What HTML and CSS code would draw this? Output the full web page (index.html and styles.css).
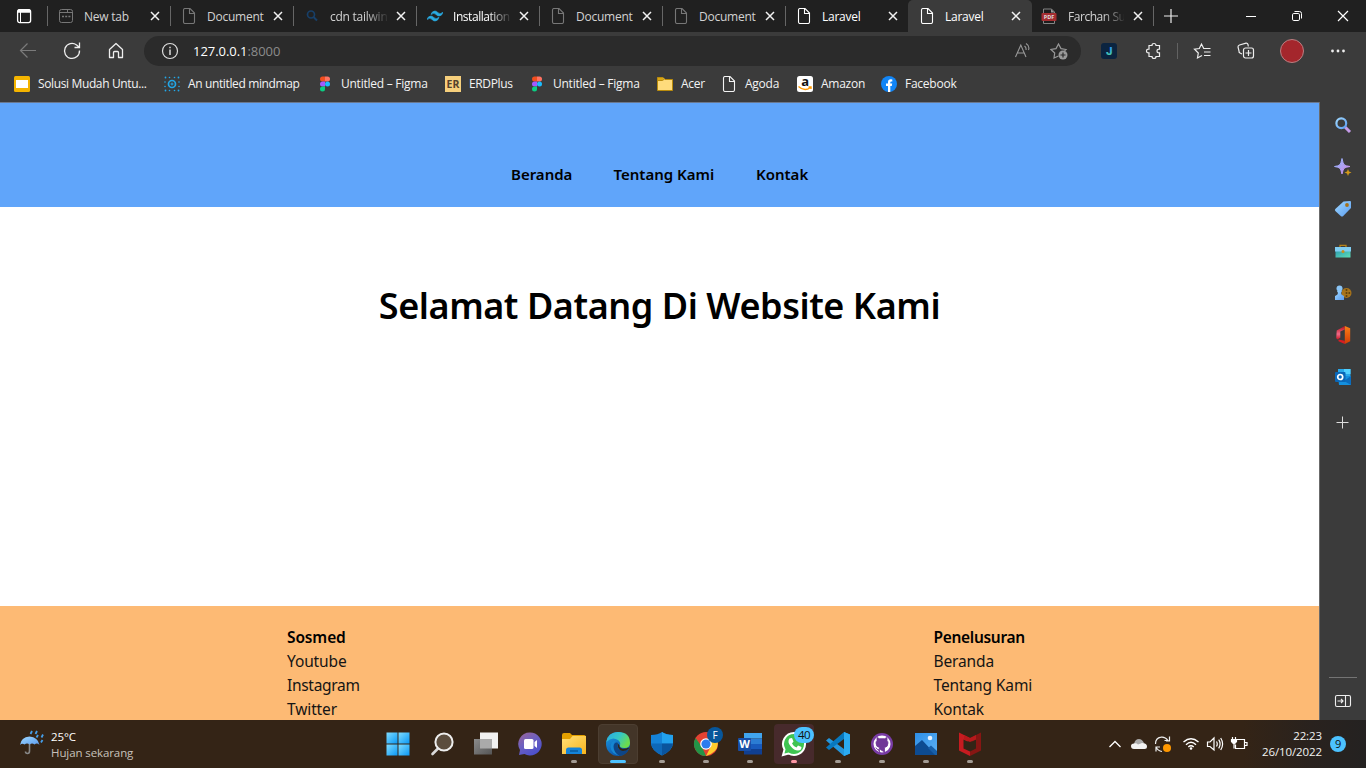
FILE: index.html
```html
<!DOCTYPE html>
<html lang="id">
<head>
<meta charset="utf-8">
<title>Laravel</title>
<link rel="stylesheet" href="styles.css">
</head>
<body>
<svg class="defs" width="0" height="0">
  <defs>
    <linearGradient id="gWin" x1="0" y1="0" x2="1" y2="1"><stop offset="0" stop-color="#7fdcff"/><stop offset="1" stop-color="#0a98f5"/></linearGradient>
    <linearGradient id="gBlue" x1="0" y1="0" x2="1" y2="1"><stop offset="0" stop-color="#9fd8ff"/><stop offset="1" stop-color="#5b9cf0"/></linearGradient>
    <linearGradient id="gViolet" x1="0" y1="0" x2="1" y2="1"><stop offset="0" stop-color="#8cb8ff"/><stop offset="1" stop-color="#d489e6"/></linearGradient>
    <linearGradient id="gTeal" x1="0" y1="0" x2="1" y2="1"><stop offset="0" stop-color="#2e9ab0"/><stop offset="1" stop-color="#5ce0b8"/></linearGradient>
    <linearGradient id="gChat" x1="0" y1="0" x2="0.6" y2="1"><stop offset="0" stop-color="#9c6496"/><stop offset="0.5" stop-color="#6d60c0"/><stop offset="1" stop-color="#4c50cb"/></linearGradient>
    <linearGradient id="gFolder" x1="0" y1="0" x2="1" y2="1"><stop offset="0" stop-color="#ffe07a"/><stop offset="1" stop-color="#f8b41c"/></linearGradient>
    <linearGradient id="gEdge" x1="0" y1="0" x2="1" y2="0.5"><stop offset="0" stop-color="#2aa9e6"/><stop offset="0.55" stop-color="#35c7c4"/><stop offset="1" stop-color="#6cdc4c"/></linearGradient>
    <linearGradient id="gEdge2" x1="0" y1="0" x2="0.5" y2="1"><stop offset="0" stop-color="#1c9de4"/><stop offset="1" stop-color="#0b56ad"/></linearGradient>
    <linearGradient id="gOffice" x1="0" y1="0" x2="0" y2="1"><stop offset="0" stop-color="#b50d18"/><stop offset="0.6" stop-color="#f06a88"/><stop offset="1" stop-color="#c81420"/></linearGradient>
    <linearGradient id="gOffice2" x1="0" y1="0" x2="0" y2="1"><stop offset="0" stop-color="#f98016"/><stop offset="1" stop-color="#d13a06"/></linearGradient>
    <linearGradient id="gPhoto" x1="0" y1="0" x2="1" y2="1"><stop offset="0" stop-color="#2d8ee6"/><stop offset="1" stop-color="#5eb2f4"/></linearGradient>
    <linearGradient id="gView" x1="0" y1="0" x2="1" y2="1"><stop offset="0" stop-color="#8b8b8b"/><stop offset="1" stop-color="#555"/></linearGradient>
    <linearGradient id="gJ" x1="0" y1="0" x2="0" y2="1"><stop offset="0.3" stop-color="#2f9bf0"/><stop offset="1" stop-color="#4fe08c"/></linearGradient>
    <symbol id="page" viewBox="0 0 16 16"><path d="M2.5 2Q2.500.5 4 .5H9L13.500 5V14Q13.500 15.500 12 15.500H4Q2.500 15.500 2.500 14ZM8.500.500V5.500H13.500" fill="none" stroke="currentColor" stroke-width="1.1"/></symbol>
    <symbol id="close" viewBox="0 0 10 10"><path d="M1 1L9 9M9 1L1 9" stroke="#f2f2f2" stroke-width="1.5" fill="none"/></symbol>
    <symbol id="figma" viewBox="0 0 16 16"><path d="M5.500.5H8V5.500H5.500A2.500 2.500 0 0 1 5.500.5" fill="#f24e1e"/><path d="M8 .5H10.500A2.500 2.500 0 0 1 10.500 5.500H8Z" fill="#ff7262"/><path d="M5.500 5.500H8V10.500H5.500A2.500 2.500 0 0 1 5.500 5.500" fill="#a259ff"/><circle cx="10.500" cy="8" r="2.500" fill="#1abcfe"/><path d="M5.500 10.500H8V13A2.500 2.500 0 1 1 5.500 10.500" fill="#0acf83"/></symbol>
  </defs>
</svg>

<header class="tabstrip">
  <div class="tab-actions"><svg width="16" height="16" viewBox="0 0 16 16"><rect x="1.600" y="1.600" width="13" height="13" rx="2" fill="none" stroke="#fff" stroke-width="1.300"/><path d="M1.500 4V3Q1.500 1 3.500 1H12.500Q14.500 1 14.500 3V4.800H1.500Z" fill="#fff"/><path d="M4.500 4V14.500" stroke="#fff"/></svg></div>
  <div class="tab dim"><svg class="fav" viewBox="0 0 16 16" fill="none" stroke="currentColor"><rect x="1.500" y="1.500" width="13" height="13" rx="2"/><path d="M2 4.500H14M9.500 4V2"/><path d="M4 8.500H6M7.200 8.500H9.200M10.400 8.500H12.400" stroke-width="1.500"/></svg><span class="tab-title">New tab</span><svg class="x"><use href="#close"/></svg></div>
  <div class="tab dim"><svg class="fav"><use href="#page"/></svg><span class="tab-title">Document</span><svg class="x"><use href="#close"/></svg></div>
  <div class="tab dim"><svg class="fav" viewBox="0 0 16 16"><circle cx="7" cy="6.500" r="3.500" fill="none" stroke="#173f68" stroke-width="1.700"/><path d="M9.500 9L13 12.500" stroke="#173f68" stroke-width="2"/></svg><span class="tab-title fade">cdn tailwin</span><svg class="x"><use href="#close"/></svg></div>
  <div class="tab bright"><svg class="fav" viewBox="0 0 16 16"><path d="M4 6.500Q5 3 8 3Q9.500 3 11 4.700Q13 6.800 16 4.300Q15 8 12 8Q10.500 8 9 6.400Q7 4.300 4 6.500ZM0 11.500Q1 8 4 8Q5.500 8 7 9.700Q9 11.800 12 9.300Q11 13 8 13Q6.500 13 5 11.400Q3 9.300 0 11.500Z" fill="#29abe2" stroke="#29abe2" stroke-width=".6"/></svg><span class="tab-title fade tight">Installation</span><svg class="x"><use href="#close"/></svg></div>
  <div class="tab dim"><svg class="fav"><use href="#page"/></svg><span class="tab-title">Document</span><svg class="x"><use href="#close"/></svg></div>
  <div class="tab dim"><svg class="fav"><use href="#page"/></svg><span class="tab-title">Document</span><svg class="x"><use href="#close"/></svg></div>
  <div class="tab bright"><svg class="fav"><use href="#page"/></svg><span class="tab-title">Laravel</span><svg class="x"><use href="#close"/></svg></div>
  <div class="tab bright active"><svg class="fav"><use href="#page"/></svg><span class="tab-title">Laravel</span><svg class="x"><use href="#close"/></svg></div>
  <div class="tab dim last"><svg class="fav" viewBox="0 0 16 16"><path d="M2.500 1H10.500L13.500 4V15.500H2.500Z" fill="#1d1d1d" stroke="#858585"/><path d="M10 1V4.500H13.500" fill="#999"/><rect x=".5" y="5" width="15" height="8" rx="1" fill="#a52d30"/><text x="8" y="11.200" text-anchor="middle" class="pdf">PDF</text></svg><span class="tab-title fade tight">Farchan Su</span><svg class="x"><use href="#close"/></svg></div>
  <div class="newtab"><svg width="16" height="16" viewBox="0 0 16 16"><path d="M8 1V15M1 8H15" stroke="#eee" stroke-width="1.200"/></svg></div>
  <div class="winctl">
    <svg viewBox="0 0 12 12"><path d="M1 6.500H11" stroke="#fff"/></svg>
    <svg viewBox="0 0 12 12" fill="none" stroke="#fff"><rect x="1.500" y="3.500" width="7" height="7" rx="1.300"/><path d="M3.500 1.500H8.500Q10.500 1.500 10.500 3.500V8.500"/></svg>
    <svg viewBox="0 0 12 12"><path d="M1 1L11 11M11 1L1 11" stroke="#fff" stroke-width="1.200"/></svg>
  </div>
</header>

<div class="toolbar">
  <div class="nav-icons">
    <svg viewBox="0 0 20 20" fill="none" stroke="#7b7b7b" stroke-width="1.200"><path d="M18 9.500H2.500M9.500 2.500L2.500 9.500L9.500 16.500"/></svg>
    <svg viewBox="0 0 20 20" fill="none" stroke="#eee" stroke-width="1.300"><path d="M17.500 9.500A7.500 7.500 0 1 1 14.600 4L17 6M17.500 1.500V6.500H12.500"/></svg>
    <svg viewBox="0 0 20 20" fill="none" stroke="#eee" stroke-width="1.300"><path d="M3.500 8.500L10 2.500L16.500 8.500V16.500H12.500V11.500Q12.500 10.500 11.500 10.500H8.500Q7.500 10.500 7.500 11.500V16.500H3.500Z" stroke-linejoin="round"/></svg>
  </div>
  <div class="omnibox">
    <svg class="info" viewBox="0 0 18 18" fill="none" stroke="#ddd" stroke-width="1.200"><circle cx="9" cy="9" r="7.500"/><path d="M9 7.500V13M9 4.700V6.200" stroke-width="1.500"/></svg>
    <span class="url">127.0.0.1<span class="port">:8000</span></span>
    <svg class="read" viewBox="0 0 18 18" fill="none" stroke="#999" stroke-width="1.100"><path d="M1.500 15L6.800 3L12 15M3.300 11H10.200M10.500 4Q12.500 5.500 12 8M12 1.500Q16 4 14.500 8"/></svg>
    <svg class="star" viewBox="0 0 18 18" fill="none" stroke="#999" stroke-width="1.200"><path d="M8.500 14L4 16L4.700 11L1 7.500L6 6.600L8.500 2L11 6.600L16 7.500L14.500 8.800"/><circle cx="13" cy="13" r="4.500" fill="#999" stroke="none"/><path d="M13 10.500V15.500M10.500 13H15.500" stroke="#2b2b2b"/></svg>
  </div>
  <div class="ext">
    <svg viewBox="0 0 18 18"><rect x="1" y="1" width="16" height="16" rx="3" fill="#0b2440"/><text x="9" y="13" text-anchor="middle" class="jay">J</text></svg>
    <svg viewBox="0 0 18 18" fill="none" stroke="#eee" stroke-width="1.200"><path d="M4 3.500H7Q7 1.500 9 1.500Q11 1.500 11 3.500H14.500V7.200Q12 7 12 9Q12 11 14.500 10.800V14.500H11Q11 16.500 9 16.500Q7 16.500 7 14.500H4V10.800Q1.500 11 1.500 9Q1.500 7 4 7.200Z"/></svg>
    <i class="bar"></i>
    <svg viewBox="0 0 18 18" fill="none" stroke="#eee" stroke-width="1.200"><path d="M9 13.500L4.500 16L5.300 11L1.500 7.200L6.300 6.500L8.500 2L10.700 6.500H17.500M11 10H17.500M11 13.500H17.500"/></svg>
    <svg viewBox="0 0 18 18" fill="none" stroke="#eee" stroke-width="1.200"><path d="M5 12L3 11Q1.800 10.500 2 9L1 5Q1 3.500 2.500 3L9 1.200Q10.500 1 11 2.500L11.300 4.500"/><rect x="6.500" y="6" width="10" height="10" rx="2"/><path d="M11.500 8V14M8.500 11H14.500"/></svg>
    <i class="avatar"></i>
    <svg viewBox="0 0 18 18" fill="#eee"><circle cx="3.500" cy="9" r="1.400"/><circle cx="9" cy="9" r="1.400"/><circle cx="14.500" cy="9" r="1.400"/></svg>
  </div>
</div>

<div class="bookmarks">
  <div class="bm narrow"><svg viewBox="0 0 16 16"><rect width="16" height="16" rx="1.500" fill="#f4b400"/><rect x="2" y="4" width="12" height="8" fill="#fff"/></svg><span>Solusi Mudah Untu...</span></div>
  <div class="bm narrow"><svg viewBox="0 0 16 16" fill="none" stroke="#22a7e8"><circle cx="8" cy="8" r="3.500" stroke-width="1.700"/><circle cx="8" cy="8" r="1"/><g fill="#22a7e8" stroke="none"><circle cx="1.500" cy="1.500" r=".9"/><circle cx="5.500" cy="1.500" r=".8"/><circle cx="10.500" cy="1.500" r=".8"/><circle cx="14.500" cy="1.500" r=".9"/><circle cx="1" cy="6" r=".8"/><circle cx="15" cy="6" r=".8"/><circle cx="1" cy="10.500" r=".8"/><circle cx="15" cy="10.500" r=".8"/><circle cx="1.500" cy="14.500" r=".9"/><circle cx="5.500" cy="14.500" r=".8"/><circle cx="10.500" cy="14.500" r=".8"/><circle cx="14.500" cy="14.500" r=".9"/></g></svg><span>An untitled mindmap</span></div>
  <div class="bm"><svg><use href="#figma"/></svg><span>Untitled – Figma</span></div>
  <div class="bm narrow"><svg viewBox="0 0 16 16"><rect width="16" height="16" fill="#f6cf7c"/><text x="8" y="12" text-anchor="middle" class="er">ER</text></svg><span>ERDPlus</span></div>
  <div class="bm"><svg><use href="#figma"/></svg><span>Untitled – Figma</span></div>
  <div class="bm"><svg viewBox="0 0 16 16"><path d="M.5 1.500H6L8 3.500H15.500V14.500H.5Z" fill="#ffdc7c" stroke="#b98b0c"/><path d="M1 2H5.800L7 3.200L5.500 4.500H1Z" fill="#d9a514"/><path d="M1 4.500H5.500L7.500 3" fill="none" stroke="#b98b0c"/></svg><span>Acer</span></div>
  <div class="bm"><svg><use href="#page"/></svg><span>Agoda</span></div>
  <div class="bm"><svg viewBox="0 0 16 16"><rect width="16" height="16" rx="2.500" fill="#fff"/><text x="8" y="10" text-anchor="middle" class="amz">a</text><path d="M1.500 10.500Q7.500 16 13.500 11.500M11.500 11H14V13" fill="none" stroke="#f90" stroke-width="1.400"/></svg><span>Amazon</span></div>
  <div class="bm"><svg viewBox="0 0 16 16"><circle cx="8" cy="8" r="8" fill="#1285f5"/><path d="M7 16V10H5V7.500H7V6Q7 3.200 9.800 3.200L11.300 3.400V5.500H10.200Q9.300 5.500 9.300 6.400V7.500H11.200L10.800 10H9.300V16Z" fill="#fff"/></svg><span>Facebook</span></div>
</div>

<div class="body">
  <div class="site">
    <nav class="site-nav"><a>Beranda</a><a>Tentang Kami</a><a>Kontak</a></nav>
    <main class="hero"><h1>Selamat Datang Di Website Kami</h1></main>
    <footer class="site-footer">
      <ul class="col"><li class="head">Sosmed</li><li>Youtube</li><li class="snug">Instagram</li><li>Twitter</li></ul>
      <ul class="col"><li class="head snug">Penelusuran</li><li>Beranda</li><li>Tentang Kami</li><li>Kontak</li></ul>
    </footer>
  </div>
  <aside class="sidebar">
    <svg viewBox="0 0 18 18" fill="none"><path d="M11 11L16 16" stroke="#c59be8" stroke-width="3"/><circle cx="7.300" cy="7.300" r="4.900" stroke="url(#gBlue)" stroke-width="2.200"/></svg>
    <svg viewBox="0 0 18 18"><path d="M8 .5Q9 6 10.500 7Q12 8 16 8.500Q12 9 10.500 10Q9 11 8 16Q7 11 5.500 10Q4 9 .5 8.500Q4 8 5.500 7Q7 6 8 .5Z" fill="url(#gViolet)" stroke="url(#gViolet)"/><path d="M14 11L15 13.500L17.500 14.500L15 15.500L14 18L13 15.500L10.500 14.500L13 13.500Z" fill="#d49a18"/></svg>
    <svg viewBox="0 0 18 18"><path d="M9.500 1.500L16 1Q17 1 17 2V8L9 16.200Q8 17 7 16.200L1.300 11Q.5 10 1.300 9Z" fill="url(#gBlue)"/><circle cx="13" cy="5" r="1.900" fill="#a77118"/></svg>
    <svg viewBox="0 0 18 18"><path d="M6 5V3.300H12V5" fill="none" stroke="#b78318" stroke-width="1.300"/><rect x="1.500" y="8" width="15" height="7.500" fill="url(#gTeal)"/><path d="M1 5H17V9.500H1Z" fill="#80cdf2"/><circle cx="9" cy="9.500" r="1.500" fill="#c78f1c"/></svg>
    <svg viewBox="0 0 18 18"><circle cx="12.500" cy="9" r="5" fill="#a8741b"/><g fill="#5d410f"><circle cx="12.500" cy="9" r="1"/><circle cx="12.500" cy="6" r="1"/><circle cx="15.300" cy="9" r="1"/><circle cx="12.500" cy="12" r="1"/></g><circle cx="5.500" cy="4.500" r="3" fill="#8ac5f6"/><path d="M3 7H8L7 9Q7 11 10 12V16H1V12Q4 11 4 9Z" fill="url(#gBlue)"/></svg>
    <svg viewBox="0 0 18 20"><path d="M2 5L11 0V4L6 6V13L3 15Q1.500 14 1.500 13Z" fill="url(#gOffice)"/><path d="M4 15L11 16.500V20L4 17Z" fill="#d81c23"/><path d="M11 0L17 2.500V17L11 20Z" fill="url(#gOffice2)"/></svg>
    <svg viewBox="0 0 18 18"><rect x="4" y="1" width="12.500" height="10" fill="#28a8ea"/><path d="M10 1H16.500V6H10Z" fill="#50d0ff"/><path d="M4 8H17V17H5Z" fill="#1490df"/><path d="M17 8L10 13L17 17Z" fill="#0b6cbd"/><rect x="1" y="4" width="10.500" height="10" rx="1" fill="#0a67b7"/><circle cx="6.200" cy="9" r="2.500" fill="none" stroke="#fff" stroke-width="1.700"/></svg>
    <svg class="plus" viewBox="0 0 18 18"><path d="M8.500 2.500V14.500M2.500 8.500H14.500" stroke="#ddd"/></svg>
    <div class="side-end"><svg viewBox="0 0 18 18" fill="none" stroke="#eee" stroke-width="1.100"><rect x="1.500" y="3.500" width="15" height="11" rx="1.500"/><path d="M11.500 3.500V14.500M3.500 9H9M7 7L9 9L7 11"/></svg></div>
  </aside>
</div>

<div class="taskbar">
  <div class="weather">
    <svg viewBox="0 0 28 28"><path d="M11.500 14V22Q11.500 24.500 9.500 24.500Q7.500 24.500 7.500 22.500" fill="none" stroke="#888" stroke-width="1.600"/><path d="M2 16Q3 8 11.500 7.500Q20 8 21.500 16Q19 13.500 16.500 15.500Q14 13.500 11.700 15.500Q9 13.500 6.500 15.500Q4 14 2 16Z" fill="url(#gBlue)"/><path d="M14 2L12.500 5M19 2L17.500 5M20 6L18.500 8.500M25 5.500L23.500 8.500M24.500 11L23 13.500" stroke="#459eea" stroke-width="1.800"/></svg>
    <div class="wtext"><b>25°C</b><span>Hujan sekarang</span></div>
  </div>
  <div class="apps">
    <div class="app"><svg viewBox="0 0 28 28" fill="url(#gWin)"><rect x="2.500" y="2.500" width="11" height="11"/><rect x="14.500" y="2.500" width="11" height="11"/><rect x="2.500" y="14.500" width="11" height="11"/><rect x="14.500" y="14.500" width="11" height="11"/></svg></div>
    <div class="app"><svg viewBox="0 0 28 28"><path d="M10.500 18L4.500 24" stroke="#d9d9d9" stroke-width="2.600" stroke-linecap="round"/><circle cx="16" cy="12" r="8.600" fill="#5b4d3e" stroke="#eee" stroke-width="2"/></svg></div>
    <div class="app"><svg viewBox="0 0 28 28"><rect x="8" y="2.500" width="18" height="16" fill="#f1f1f1"/><rect x="2" y="9" width="18" height="15.500" fill="url(#gView)"/><rect x="8" y="9" width="12" height="9.500" fill="#aaa"/></svg></div>
    <div class="app"><svg viewBox="0 0 28 28"><path d="M14 2.500A11.500 11.500 0 1 1 8.500 24L3 25L4 20A11.500 11.500 0 0 1 14 2.500Z" fill="url(#gChat)"/><rect x="8" y="9" width="9.500" height="10" rx="1.500" fill="#fff"/><path d="M18.500 12L21 10V18L18.500 16Z" fill="#fff"/></svg></div>
    <div class="app run"><svg viewBox="0 0 28 28"><path d="M2 5Q2 3 4 3H10L12 5H24Q26 5 26 8V12H2Z" fill="#e4a000"/><path d="M2 9H10L12.500 6H26V24H2Z" fill="url(#gFolder)"/><path d="M6 24V20Q6 17.500 8.500 17.500H19.500Q22 17.500 22 20V24Z" fill="#1483d8"/><path d="M10 21H18" stroke="#075493" stroke-width="1.300"/></svg></div>
    <div class="app run current"><svg viewBox="0 0 28 28"><circle cx="14" cy="14" r="12" fill="url(#gEdge2)"/><path d="M2.300 12Q4 2 14 2Q26 2 26 13Q26 18 20.500 18Q15 18 16 15Q17 12.500 14 10Q8 6 2.300 12Z" fill="url(#gEdge)"/><path d="M14 10.500Q10 10.500 9.500 15.500Q9.500 23 16 25.800Q7 24 6.500 17Q6.500 10 14 10.500Z" fill="#1686d2"/><path d="M13.500 12.500Q12.500 21 19 21Q22 21 25 18.500Q22 25.500 15.500 26Q9.500 22 9.600 16.500Q10 12 13.500 12.500Z" fill="#0d4587"/><path d="M15.500 15.500Q15 17.500 18.500 18.700Q22 19 24.500 17.500L25 18.500Q22 21 19 21Q13.500 21 13.500 13Z" fill="#302417"/></svg></div>
    <div class="app run"><svg viewBox="0 0 28 28"><path d="M14 2Q18 5 25 5V14Q24 21 14 25.500Q4 21 3 14V5Q10 5 14 2Z" fill="#1583d8"/><path d="M14 2Q18 5 25 5V13.500H14Z" fill="#22a1ed"/><path d="M3 13.500H14V25.500Q4 21 3 13.500Z" fill="#0e68b8"/><path d="M14 13.500H25Q24 21 14 25.500Z" fill="#0a549d"/></svg></div>
    <div class="app run"><svg viewBox="0 0 28 28"><circle cx="14" cy="14" r="12" fill="#e24232"/><path d="M3.600 8L10 17L14 26A12 12 0 0 1 3.600 8Z" fill="#239447"/><path d="M14 9H25Q29 21 14 26L18.500 17Z" fill="#ffcc2e"/><circle cx="14" cy="14" r="5.800" fill="#fff"/><circle cx="14" cy="14" r="4.600" fill="#2c7cef"/></svg><span class="badge f">F</span></div>
    <div class="app run"><svg viewBox="0 0 28 28"><path d="M8 3H26V8.500H8Z" fill="#41a5ee"/><path d="M8 8.500H26V14H8Z" fill="#2b7cd3"/><path d="M8 14H26V19H8Z" fill="#185abd"/><path d="M8 19H26V24.500H8Z" fill="#103f91"/><rect x="2" y="8" width="13" height="13" rx="1" fill="#174ea7"/><text x="8.500" y="18" text-anchor="middle" class="word">W</text></svg></div>
    <div class="app run alert"><svg viewBox="0 0 28 28"><path d="M14 3A11 11 0 1 1 8.500 23.500L3 25L4.500 19.500A11 11 0 0 1 14 3Z" fill="#3fc351" stroke="#fff" stroke-width="2"/><path d="M9.500 8.500L12 8L13.500 11.500L12 13.500Q13.500 16.500 16.500 17.500L18 15.500L21.500 17Q21.500 20.500 18 20.500Q14 20.500 10.500 16Q7 12 9.500 8.500Z" fill="#fff"/></svg><span class="badge n">40</span></div>
    <div class="app run"><svg viewBox="0 0 28 28"><path d="M20 2L26 4.500V23.500L20 26L2 10.500L5 8L20 19Z" fill="#2496dc"/><path d="M20 2L2 17.500L5 20L20 9Z" fill="#0878be"/><path d="M20 2L26 4.500V23.500L20 26Z" fill="#2aabf2"/></svg></div>
    <div class="app run"><svg viewBox="0 0 28 28"><circle cx="14" cy="14" r="11" fill="#793ca5"/><circle cx="14" cy="14" r="8.500" fill="#fff"/><path d="M11.500 22V19.500Q8.500 20 7.800 17.500M11.500 19V17.500Q8 17 8 13Q8 11.500 9 10.500V7.500L11.500 8.700H16.500L19 7.500V10.500Q20 11.500 20 13Q20 17 16.500 17.500V22Z" fill="#703797" stroke="#703797" stroke-width=".8"/></svg></div>
    <div class="app run"><svg viewBox="0 0 28 28"><rect x="3" y="3" width="22" height="22" fill="url(#gPhoto)"/><circle cx="18" cy="8" r="2.300" fill="#e8f3ff"/><path d="M3 16L10 10L24 25H3Z" fill="#0d4b91"/><path d="M16 18L19 15.500L25 21V25H23Z" fill="#175fa9"/></svg></div>
    <div class="app run"><svg viewBox="0 0 28 28"><path d="M3 2.500L14 8L11.500 11.500L7.500 9.500V18.500L14 21.500V26L3 20.500Z" fill="#c71b20"/><path d="M25 2.500L14 8L16 11.500L20 9.500V18.500L14 21.500V26L25 20.500Z" fill="#861613"/><path d="M8 5L14 8L20 5V9.500L14 12L8 9.500Z" fill="#b7191b"/></svg></div>
  </div>
  <div class="tray">
    <svg class="tr" viewBox="0 0 18 18"><path d="M3.500 12L9 6.500L14.500 12" stroke="#fff" stroke-width="1.300" fill="none"/></svg>
    <svg class="tr" viewBox="0 0 18 18"><path d="M4 9Q5 4 9 4Q12 4 14 8L10 11Z" fill="#aaa"/><path d="M4 14Q1 14 1 11Q1 8.500 4 8.500Q6 7.500 8 9.500L12 8Q17 8 17 11.500Q17 14 14.500 14Z" fill="#f2f2f2"/></svg>
    <svg class="tr" viewBox="0 0 18 18" fill="none" stroke="#eee" stroke-width="1.200"><path d="M1.500 9Q1.500 3 7 2.200Q11 1.500 14 5.500H10.500M15.500 1.500V6H12M2 16.500V12H6M2 12Q4 16 8 16.500"/><circle cx="13" cy="13" r="4" fill="#ff9800" stroke="none"/></svg>
    <svg class="tr wifi" viewBox="0 0 18 18" fill="none" stroke="#fff" stroke-width="1.400"><path d="M1.500 7Q9 .5 16.500 7M4 9.700Q9 5 14 9.700M6.300 12Q9 9.500 11.700 12"/><circle cx="9" cy="13.500" r="1.300" fill="#fff" stroke="none"/></svg>
    <svg class="tr" viewBox="0 0 18 18" fill="none" stroke="#fff" stroke-width="1.200"><path d="M1.500 7H4L8 3V15L4 11.500H1.500ZM10.500 6.500Q12 9 10.500 11.500M12.700 4.700Q15.500 9 12.700 13.300M14.700 3Q18.500 9 14.700 15"/></svg>
    <svg class="tr" viewBox="0 0 18 18" fill="none" stroke="#fff" stroke-width="1.200"><path d="M7 4.500H14.500V13.500H5.500V9.500M15 7.500H17V10.500H15M2.500 2V5M5.500 2V5M4 8V13.500"/><path d="M1.500 4.500H6.500V6.500Q5.500 8.500 4 8.500Q2.500 8.500 1.500 6.500Z" fill="#fff"/></svg>
    <div class="clock"><span>22:23</span><span>26/10/2022</span></div>
    <span class="count">9</span>
  </div>
</div>
</body>
</html>
```
FILE: styles.css
```css
* { box-sizing: border-box; }
body { margin: 0; width: 1366px; height: 768px; overflow: hidden; display: flex; flex-direction: column; font: 12px "Open Sans", "Noto Sans", sans-serif; color: #f3f3f3; background: #3b3b3b; letter-spacing: -0.25px; }
svg { display: block; flex: none; }
.defs { position: absolute; }

.tabstrip { height: 32px; display: flex; background: #202020; flex: none; }
.tab-actions { width: 47px; padding: 8px 0 0 16px; }
.tab { width: 123px; height: 32px; display: flex; align-items: center; padding-left: 10px; background: linear-gradient(#666, #666) 0 6px / 1px 20px no-repeat; white-space: nowrap; }
.fav { width: 16px; height: 16px; margin-right: 10px; margin-left: 1px; }
.tab.dim { color: #d2d2d2; }
.tab.dim .fav { color: #777; }
.tab.bright { color: #fff; }
.tab-title { width: 57px; margin-right: 8.5px; }
.fade { -webkit-mask-image: linear-gradient(90deg, #000 62%, transparent 104%); mask-image: linear-gradient(90deg, #000 62%, transparent 104%); }
.tight { letter-spacing: -0.45px; }
.x { width: 10px; height: 10px; }
.tab.active { background: #3b3b3b; width: 124px; border-radius: 5px 5px 0 0; }
.tab.last { width: 121px; background: none; padding-left: 8px; }
.tab.last .fav { margin-right: 11px; }
.tab.last .tab-title { width: 56px; }
.newtab { width: 78px; height: 20px; margin-top: 6px; padding: 2px 0 0 9px; border-left: 1px solid #666; }
.winctl { display: flex; align-items: center; gap: 34px; padding-left: 14px; }
.winctl svg { width: 12px; height: 12px; }
.pdf { font: 700 5.5px "Open Sans", sans-serif; fill: #ddd; letter-spacing: 0; }

.toolbar { height: 38px; flex: none; display: flex; align-items: center; }
.nav-icons { display: flex; gap: 24px; padding-left: 18px; width: 144px; }
.nav-icons svg { width: 20px; height: 20px; }
.omnibox { width: 937px; height: 30px; border-radius: 15px; background: #2b2b2b; display: flex; align-items: center; padding: 0 13px 0 17px; }
.info, .read, .star { width: 18px; height: 18px; }
.url { flex: 1; margin-left: 14px; color: #fff; letter-spacing: -0.05px; font-size: 13px; }
.port { color: #8b8b8b; }
.star { margin-left: 18px; }
.ext { flex: 1; display: flex; align-items: center; padding-left: 19px; }
.ext svg { width: 18px; height: 18px; margin-right: 27px; }
.ext svg:nth-of-type(2) { margin-right: 14px; }
.bar { width: 1px; height: 16px; background: #626262; margin-right: 15px; }
.ext svg:nth-of-type(3) { margin-right: 26px; }
.ext svg:nth-of-type(4) { margin-right: 25px; }
.avatar { width: 24px; height: 24px; border-radius: 50%; background: #a4262c; border: 1px solid #b98083; margin-right: 25px; }
.ext svg:last-child { margin: 0; }
.jay { font: 800 11px Inter, sans-serif; fill: url(#gJ); }

.bookmarks { height: 32px; flex: none; display: grid; grid-template-columns: 150px 153px 128px 84px 128px 64px 76px 84px 84px; padding: 0 0 4px 14px; align-items: center; }
.bm { display: flex; align-items: center; gap: 8px; white-space: nowrap; }
.bm span { padding-bottom: 1px; }
.narrow { letter-spacing: -0.37px; }
.bm svg { width: 16px; height: 16px; overflow: visible; }
.er { font: 700 10.500px "Open Sans", sans-serif; fill: #55402c; letter-spacing: 0; }
.amz { font: 700 13px "Open Sans", sans-serif; fill: #111; }

.body { height: 618px; flex: none; display: flex; }
.site { width: 1319px; border-top: 1px solid #6a7890; display: flex; flex-direction: column; background: #fff; color: #000; font: 16px/24px "Noto Sans", "Open Sans", sans-serif; letter-spacing: 0; }
.site-nav { height: 104px; flex: none; background: #60a5fa; padding: 59px 0 0 511px; display: grid; grid-template-columns: 102.5px 142.5px 60px; font-weight: 600; font-size: 15px; white-space: nowrap; }
.hero { height: 399px; flex: none; padding-top: 79px; text-align: center; }
h1 { margin: 0; font-size: 36px; line-height: 40px; font-weight: 600; letter-spacing: -0.45px; white-space: nowrap; }
.site-footer { height: 114px; flex: none; overflow: hidden; background: #fdba74; padding: 19px 0 0 287px; display: grid; grid-template-columns: 646.5px 120px; }
.col { list-style: none; margin: 0; padding: 0; font-size: 15.500px; letter-spacing: -0.12px; white-space: nowrap; font-weight: 400; color: #151515; }
.head { font-weight: 600; color: #000; }
.snug { letter-spacing: -0.3px; }

.sidebar { width: 47px; border-left: 1px solid #6b6b6b; display: flex; flex-direction: column; align-items: center; padding-top: 14px; gap: 24px; }
.sidebar svg { width: 18px; height: 18px; }
.sidebar .plus { margin-top: 4px; }
.side-end { margin-top: auto; width: 28px; border-top: 1px solid #747474; padding: 14px 0 10px 5px; }

.taskbar { height: 48px; flex: none; display: flex; background: linear-gradient(90deg, #342416 0, #342416 91%, #29221e 96%, #242221 100%); }
.weather { width: 376px; display: flex; padding: 9px 0 0 18px; }
.weather svg { width: 28px; height: 28px; }
.wtext { display: flex; flex-direction: column; line-height: 16px; padding-left: 5px; font-size: 11.500px; letter-spacing: -0.1px; }
.wtext b { font-weight: 400; color: #fff; }
.wtext span { color: #c7c1bb; }
.apps { display: grid; grid-template-columns: repeat(14, 44px); width: 616px; }
.app { position: relative; width: 40px; height: 40px; margin: 4px 2px; border-radius: 4px; padding: 6px; }
.app svg { width: 28px; height: 28px; }
.run::after { content: ""; position: absolute; left: 17px; bottom: 1px; width: 6px; height: 3px; border-radius: 2px; background: #a39c94; }
.current { background: #433528; border: 1px solid #4c3e31; padding: 5px; }
.current::after { left: 11px; bottom: 0; width: 16px; background: #4cc2ff; }
.alert { background: #472a2c; }
.alert::after { background: #ff99a4; }
.badge { position: absolute; letter-spacing: 0; text-align: center; }
.f { left: 21px; top: 3px; width: 16px; height: 16px; border-radius: 8px; background: #07569a; color: #fff; font-size: 10px; line-height: 16px; }
.n { left: 20px; top: 3px; width: 20px; height: 16px; border-radius: 8px; background: #4cc2ff; color: #111; font-size: 11.500px; line-height: 16px; letter-spacing: -0.5px; }
.word { font: 700 11px "Open Sans", sans-serif; fill: #fff; }
.tray { flex: 1; display: flex; align-items: center; padding-left: 114px; }
.tr { width: 18px; height: 18px; margin-right: 6px; }
.wifi { margin-left: 4px; }
.clock { display: flex; flex-direction: column; text-align: right; line-height: 16px; width: 68px; font-size: 11.500px; letter-spacing: -0.1px; margin-right: 8px; }
.count { width: 16px; height: 16px; border-radius: 50%; background: #4cc2ff; color: #111; text-align: center; line-height: 16px; font-size: 11px; }
```
